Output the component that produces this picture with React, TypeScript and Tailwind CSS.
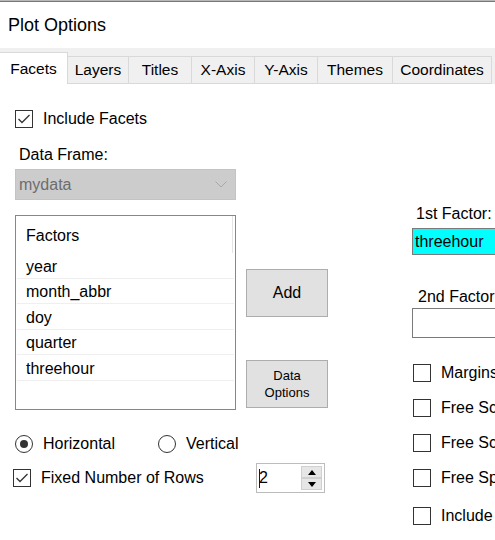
import React from "react";

function CheckBox({ checked = false }: { checked?: boolean }) {
  return (
    <div className="w-[18px] h-[18px] border border-[#333333] bg-white flex items-center justify-center shrink-0">
      {checked && (
        <svg width="16" height="16" viewBox="0 0 16 16">
          <polyline points="2.5,8 6,11.5 13.5,4" fill="none" stroke="#333333" strokeWidth="1.3" />
        </svg>
      )}
    </div>
  );
}

function Radio({ checked = false }: { checked?: boolean }) {
  return (
    <div className="w-[18px] h-[18px] rounded-full border border-[#333333] bg-white flex items-center justify-center shrink-0">
      {checked && <div className="w-[8px] h-[8px] rounded-full bg-[#333333]" />}
    </div>
  );
}

const tabs = [
  { label: "Layers", w: "w-[61px]" },
  { label: "Titles", w: "w-[63px]" },
  { label: "X-Axis", w: "w-[63px]" },
  { label: "Y-Axis", w: "w-[63px]" },
  { label: "Themes", w: "w-[75px]" },
  { label: "Coordinates", w: "w-[99px]" },
];

const factors = ["year", "month_abbr", "doy", "quarter", "threehour"];

export default function App() {
  return (
    <div className="w-[495px] h-[540px] overflow-hidden bg-white text-black text-[16px] font-['Liberation_Sans',Arial,sans-serif]">
      <div className="h-px bg-[#b9b9b9]" />
      <div className="h-px bg-[#3f83c9]" />
      <div className="h-[46px] flex items-center pl-[8px] text-[18px]">Plot Options</div>

      {/* tab strip */}
      <div className="h-[36px] bg-[#f0f0f0] flex items-end">
        <div className="w-[68px] h-[32px] bg-white border-t border-r border-[#d9d9d9] flex items-center justify-center text-[15.5px] shrink-0">
          Facets
        </div>
        {tabs.map((t) => (
          <div
            key={t.label}
            className={`${t.w} h-[28px] bg-[#f0f0f0] border-t border-r border-b border-[#d9d9d9] flex items-center justify-center text-[15.5px] shrink-0`}
          >
            {t.label}
          </div>
        ))}
      </div>

      {/* content */}
      <div className="flex pl-[15px]">
        <div className="w-[313px] shrink-0 flex flex-col">
          <div className="flex gap-[10px]">
            {/* left stack */}
            <div className="w-[221px] flex flex-col">
              <div className="mt-[26px] h-[18px] flex items-center gap-[10px]">
                <CheckBox checked />
                <span className="whitespace-nowrap">Include Facets</span>
              </div>
              <div className="mt-[17px] h-[20px] leading-[20px] pl-[4px]">Data Frame:</div>
              <div className="mt-[4px] h-[31px] border border-[#c4c4c4] bg-[#cccccc] flex items-center justify-between pl-[3px] pr-[8px] text-[#6d6d6d]">
                <span>mydata</span>
                <svg width="12" height="7" viewBox="0 0 12 7">
                  <polyline points="0.5,0.5 6,6 11.5,0.5" fill="none" stroke="#a8a8a8" strokeWidth="1" />
                </svg>
              </div>
              <div className="mt-[15px] h-[195px] border border-[#828790] bg-white flex flex-col">
                <div className="h-[37px] flex items-stretch">
                  <div className="flex-1 flex items-center pl-[10px] pt-[3px]">Factors</div>
                  <div className="w-px bg-[#e5e5e5] mr-[2px]" />
                </div>
                {factors.map((f) => (
                  <div
                    key={f}
                    className="h-[25.5px] mx-px border-b border-[#efefef] pl-[9px] pt-[3px] flex items-center"
                  >
                    {f}
                  </div>
                ))}
              </div>
            </div>

            {/* middle stack */}
            <div className="w-[82px] flex flex-col">
              <div className="mt-[185px] h-[48px] bg-[#e1e1e1] border border-[#adadad] flex items-center justify-center">
                Add
              </div>
              <div className="mt-[43px] h-[48px] bg-[#e1e1e1] border border-[#adadad] flex flex-col items-center justify-center text-[13px] leading-[17px]">
                <span>Data</span>
                <span>Options</span>
              </div>
            </div>
          </div>

          {/* radios */}
          <div className="mt-[25px] h-[18px] flex items-center">
            <div className="w-[143px] flex items-center gap-[10px] shrink-0">
              <Radio checked />
              <span>Horizontal</span>
            </div>
            <div className="flex items-center gap-[10px] whitespace-nowrap">
              <Radio />
              <span>Vertical</span>
            </div>
          </div>

          {/* fixed rows */}
          <div className="mt-[10px] h-[30px] flex items-center -ml-[2px]">
            <div className="w-[243px] flex items-center gap-[10px] shrink-0">
              <CheckBox checked />
              <span className="whitespace-nowrap">Fixed Number of Rows</span>
            </div>
            <div className="w-[69px] h-[30px] border border-[#bcbcbc] bg-white flex shrink-0">
              <div className="flex-1 flex items-center pl-[2px]">
                <span className="w-px h-[19px] bg-[#1a1a1a]" />
                <span className="-ml-[1px]">2</span>
              </div>
              <div className="w-[21px] my-[2px] mr-[2px] flex flex-col">
                <div className="flex-1 bg-[#e6e6e6] border border-[#d0d0d0] flex items-center justify-center">
                  <svg width="8" height="5" viewBox="0 0 8 5">
                    <polygon points="4,0 8,5 0,5" fill="#000" />
                  </svg>
                </div>
                <div className="flex-1 bg-[#e6e6e6] border border-[#d0d0d0] flex items-center justify-center">
                  <svg width="8" height="5" viewBox="0 0 8 5">
                    <polygon points="0,0 8,0 4,5" fill="#000" />
                  </svg>
                </div>
              </div>
            </div>
          </div>
        </div>

        {/* right column */}
        <div className="ml-[84px] flex-1 min-w-0 flex flex-col">
          <div className="mt-[120px] h-[20px] leading-[20px] pl-[4px] whitespace-nowrap">1st Factor:</div>
          <div className="mt-[4px] h-[27px] w-[120px] shrink-0 border border-[#7a7a7a] bg-[#00ffff] pl-[2px] flex items-center">
            threehour
          </div>
          <div className="mt-[32px] h-[20px] leading-[20px] pl-[6px] whitespace-nowrap">2nd Factor:</div>
          <div className="mt-[1px] h-[30px] w-[120px] shrink-0 border border-[#7a7a7a] bg-white" />
          {[
            { label: "Margins", mt: "mt-[26px]" },
            { label: "Free Scales X", mt: "mt-[17px]" },
            { label: "Free Scales Y", mt: "mt-[17px]" },
            { label: "Free Space", mt: "mt-[17px]" },
            { label: "Include", mt: "mt-[20px]" },
          ].map((c) => (
            <div key={c.label} className={`${c.mt} h-[18px] flex items-center gap-[10px] pl-px whitespace-nowrap`}>
              <CheckBox />
              <span>{c.label}</span>
            </div>
          ))}
        </div>
      </div>
    </div>
  );
}
